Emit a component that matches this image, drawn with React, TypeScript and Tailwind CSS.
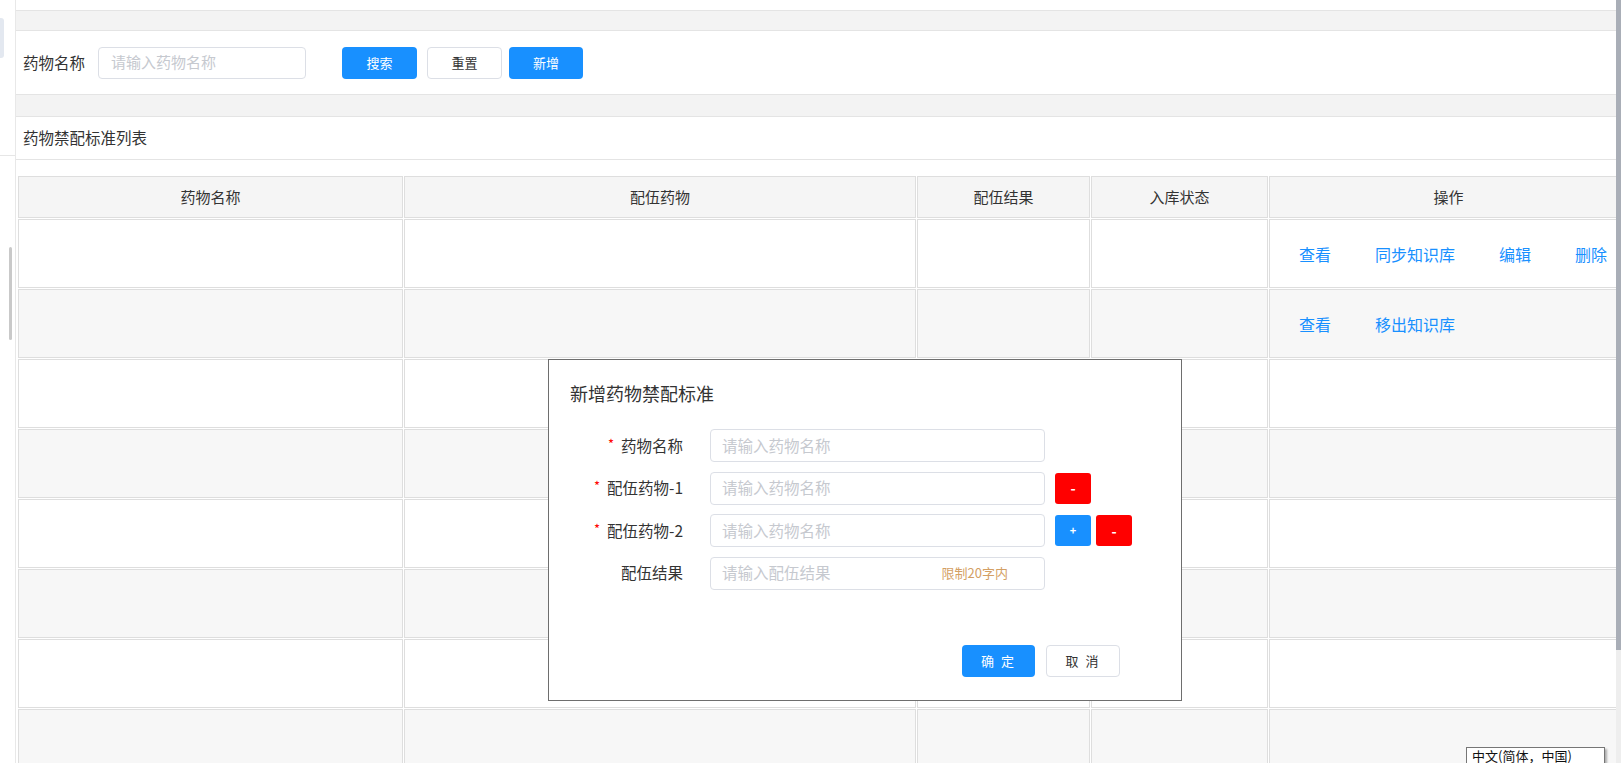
import React from "react";

const FONT = { fontFamily: '"Noto Sans CJK SC", "Noto Sans", sans-serif' };

function Field({ placeholder, width, extra }: { placeholder: string; width: string; extra?: React.ReactNode }) {
  return (
    <div className={`${width} h-full flex items-center justify-between border border-[#dcdfe6] rounded-[4px] bg-white pl-[11px] pr-[36px]`}>
      <span className="text-[15.5px] text-[#c6c9cf] leading-none">{placeholder}</span>
      {extra}
    </div>
  );
}

function FormRow({ label, required, children }: { label: string; required?: boolean; children: React.ReactNode }) {
  return (
    <div className="flex items-center h-[33px]">
      <div className="w-[134px] flex justify-end items-center text-[15.5px] text-[#333]">
        {required && <span className="text-[#f00] text-[13px] mr-[7px] -mt-[4px]">*</span>}
        <span>{label}</span>
      </div>
      <div className="ml-[27px] w-[335px] h-full">
        {children}
      </div>
    </div>
  );
}

export default function App() {
  const rows = [0, 1, 2, 3, 4, 5, 6, 7];
  return (
    <div style={FONT} className="relative w-[1621px] h-[763px] overflow-hidden bg-white flex">
      {/* left sidebar sliver */}
      <div className="w-[16px] shrink-0 border-r border-[#e8e8e8] flex flex-col">
        <div className="mt-[18px] w-[4px] h-[40px] rounded-r-[3px] bg-[#e3e8f0]" />
        <div className="mt-[97px] h-px w-full bg-[#e6e6e6]" />
        <div className="mt-[91px] ml-[9px] w-[3px] h-[93px] rounded-full bg-[#c9c9c9]" />
      </div>

      {/* main */}
      <div className="flex-1 min-w-0 overflow-hidden flex flex-col">
        <div className="h-[11px] shrink-0 bg-white border-b border-[#e4e4e4]" />
        <div className="h-[20px] shrink-0 bg-[#f3f3f3] border-b border-[#e4e4e4]" />
        {/* search panel */}
        <div className="h-[64px] shrink-0 bg-white border-b border-[#e4e4e4] flex items-center pl-[7px]">
          <span className="text-[15.5px] text-[#333]">药物名称</span>
          <div className="ml-[13px] w-[208px] h-[32px] border border-[#dcdfe6] rounded-[4px] flex items-center pl-[12px]">
            <span className="text-[15px] text-[#c6c9cf]">请输入药物名称</span>
          </div>
          <button className="ml-[36px] w-[75px] h-[32px] rounded-[4px] bg-[#1890ff] text-white text-[13px]">搜索</button>
          <button className="ml-[10px] w-[75px] h-[32px] rounded-[4px] bg-white border border-[#dcdfe6] text-[#333] text-[13px]">重置</button>
          <button className="ml-[7px] w-[74px] h-[32px] rounded-[4px] bg-[#1890ff] text-white text-[13px]">新增</button>
        </div>
        <div className="h-[22px] shrink-0 bg-[#f3f3f3] border-b border-[#e4e4e4]" />
        {/* title panel */}
        <div className="h-[43px] shrink-0 bg-white border-b border-[#e4e4e4] flex items-center pl-[7px]">
          <span className="text-[15.5px] text-[#333]">药物禁配标准列表</span>
        </div>
        <div className="h-[15px] shrink-0" />
        {/* table */}
        <table className="ml-[1px] w-[1606px] table-fixed border-separate border-spacing-[1px] bg-white shrink-0">
          <colgroup>
            <col className="w-[385px]" />
            <col className="w-[512px]" />
            <col className="w-[173px]" />
            <col className="w-[177px]" />
            <col className="w-[359px]" />
          </colgroup>
          <thead>
            <tr>
              {["药物名称", "配伍药物", "配伍结果", "入库状态", "操作"].map((h) => (
                <th key={h} className="h-[42px] bg-[#f5f5f5] border border-[#dedede] text-[15px] font-normal text-[#333]">
                  {h}
                </th>
              ))}
            </tr>
          </thead>
          <tbody>
            {rows.map((r) => {
              const bg = r % 2 === 0 ? "bg-white" : "bg-[#f7f7f7]";
              return (
                <tr key={r}>
                  <td className={`h-[69px] ${bg} border border-[#dedede]`} />
                  <td className={`h-[69px] ${bg} border border-[#dedede]`} />
                  <td className={`h-[69px] ${bg} border border-[#dedede]`} />
                  <td className={`h-[69px] ${bg} border border-[#dedede]`} />
                  <td className={`h-[69px] ${bg} border border-[#dedede]`}>
                    {r === 0 && (
                      <div className="flex gap-[44px] pl-[29px] text-[16px] text-[#1890ff]">
                        <span>查看</span>
                        <span>同步知识库</span>
                        <span>编辑</span>
                        <span>删除</span>
                      </div>
                    )}
                    {r === 1 && (
                      <div className="flex gap-[44px] pl-[29px] text-[16px] text-[#1890ff]">
                        <span>查看</span>
                        <span>移出知识库</span>
                      </div>
                    )}
                  </td>
                </tr>
              );
            })}
          </tbody>
        </table>
      </div>

      {/* right scrollbar */}
      <div className="w-[5px] shrink-0 flex flex-col">
        <div className="h-[650px] bg-[#a9aeb7]" />
        <div className="flex-1 bg-[#eeeeee]" />
      </div>

      {/* modal */}
      <div className="absolute left-[548px] top-[359px] w-[634px] h-[342px] bg-white border border-[#6e6e6e] flex flex-col">
        <div className="mt-[21px] pl-[21px] h-[24px] flex items-center text-[18px] text-[#333]">新增药物禁配标准</div>
        <div className="mt-[24px] flex flex-col gap-[9.5px]">
          <FormRow label="药物名称" required>
            <Field placeholder="请输入药物名称" width="w-full" />
          </FormRow>
          <div className="flex items-center">
            <FormRow label="配伍药物-1" required>
              <Field placeholder="请输入药物名称" width="w-full" />
            </FormRow>
            <button className="ml-[10px] w-[36px] h-[31px] rounded-[3px] bg-[#ff0000] text-white text-[14px] font-bold leading-none">-</button>
          </div>
          <div className="flex items-center">
            <FormRow label="配伍药物-2" required>
              <Field placeholder="请输入药物名称" width="w-full" />
            </FormRow>
            <button className="ml-[10px] w-[36px] h-[31px] rounded-[3px] bg-[#1890ff] text-white text-[11px] font-bold leading-none">+</button>
            <button className="ml-[5px] w-[36px] h-[31px] rounded-[3px] bg-[#ff0000] text-white text-[14px] font-bold leading-none">-</button>
          </div>
          <FormRow label="配伍结果">
            <Field
              placeholder="请输入配伍结果"
              width="w-full"
              extra={<span className="text-[13px] text-[#d4a064]">限制20字内</span>}
            />
          </FormRow>
        </div>
        <div className="mt-[55px] flex justify-end pr-[61px] gap-[11px]">
          <button className="w-[73px] h-[32px] rounded-[4px] bg-[#1890ff] text-white text-[13px] tracking-[2px]">确 定</button>
          <button className="w-[74px] h-[32px] rounded-[4px] bg-white border border-[#dcdfe6] text-[#333] text-[13px] tracking-[2px]">取 消</button>
        </div>
      </div>

      {/* IME tooltip */}
      <div className="absolute left-[1466px] top-[747px] w-[139px] h-[24px] bg-white border border-[#767676] shadow-[2px_2px_2px_rgba(0,0,0,0.3)] pl-[5px] text-[13px] text-[#111] leading-[16px]">
        中文(简体，中国)
      </div>
    </div>
  );
}
